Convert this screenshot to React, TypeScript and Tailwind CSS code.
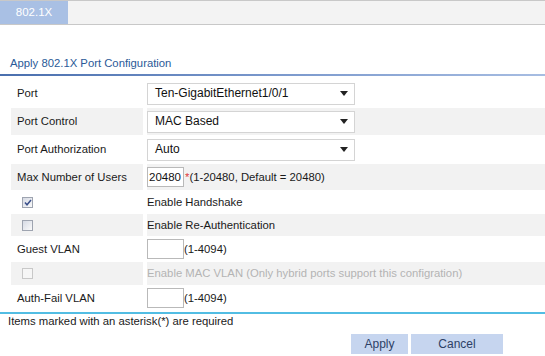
import React from 'react';

const font = { fontFamily: '"Liberation Sans", Arial, sans-serif' };

const Select: React.FC<{ value: string }> = ({ value }) => (
  <div className="flex h-[22px] w-[208px] items-center justify-between border border-[#d4d4d4] bg-white pl-[7px] pr-[6px] text-[12px] text-[#111]">
    <span>{value}</span>
    <svg width="8" height="5" viewBox="0 0 8 5">
      <path d="M0 0h8L4 5z" fill="#222" />
    </svg>
  </div>
);

const Checkbox: React.FC<{ checked?: boolean; disabled?: boolean }> = ({ checked, disabled }) => (
  <div
    className={`flex h-[11px] w-[11px] items-center justify-center border ${
      disabled ? 'border-[#c8c8c8] bg-[#f6f6f6]' : 'border-[#9ea4b0] bg-gradient-to-br from-[#d6dae4] to-[#fafafa]'
    }`}
  >
    {checked && (
      <svg width="8" height="7" viewBox="0 0 8 7">
        <path d="M1 3.5l2 2.3L7 1" stroke="#3a4f8a" strokeWidth="1.5" fill="none" />
      </svg>
    )}
  </div>
);

const Row: React.FC<{ label: React.ReactNode; gray?: boolean; h: string; children: React.ReactNode }> = ({
  label,
  gray,
  h,
  children,
}) => (
  <div className={`flex gap-[4px] ${h}`}>
    <div className={`flex w-[132px] items-center pl-[6px] ${gray ? 'bg-[#f2f2f2]' : ''}`}>{label}</div>
    <div className={`flex flex-1 items-center ${gray ? 'bg-[#f2f2f2]' : ''}`}>{children}</div>
  </div>
);

const Input: React.FC<{ value?: string }> = ({ value }) => (
  <div className="flex h-[20px] w-[37px] items-center border border-[#b9b9b9] bg-white pl-[1px] text-[11.5px] text-[#111]">
    {value}
  </div>
);

export default function App() {
  return (
    <div className="h-[356px] w-[545px] bg-white text-[11.3px] leading-[13px] text-[#1a1a1a]" style={font}>
      {/* tab bar */}
      <div className="flex h-[25px] border-y border-[#c8c8c8] bg-[#f3f3f3]">
        <div className="flex w-[68px] items-center justify-center bg-[#a9c0e4] text-[11.5px] text-white">802.1X</div>
      </div>

      <div className="pt-[32px]">
        <div className="pl-[10px] text-[#2b5a98]">Apply 802.1X Port Configuration</div>
        <div className="mt-[4px] h-[2px] bg-gradient-to-r from-[#4a6fae] via-[#7a98cc] to-[#a7bde2]" />
      </div>

      <div className="flex flex-col gap-[1px] pl-[11px] pt-[4px]">
        <Row label="Port" h="h-[27px]">
          <Select value="Ten-GigabitEthernet1/0/1" />
        </Row>
        <Row label="Port Control" h="h-[27px]" gray>
          <Select value="MAC Based" />
        </Row>
        <Row label="Port Authorization" h="h-[27px]">
          <Select value="Auto" />
        </Row>
        <Row label="Max Number of Users" h="h-[26px]" gray>
          <Input value="20480" />
          <span className="ml-[1px] text-[#e04040]">*</span>
          <span>(1-20480, Default = 20480)</span>
        </Row>
        <Row label={<span className="pl-[5px]"><Checkbox checked /></span>} h="h-[22px]">
          Enable Handshake
        </Row>
        <Row label={<span className="pl-[5px]"><Checkbox /></span>} h="h-[22px]" gray>
          Enable Re-Authentication
        </Row>
        <Row label="Guest VLAN" h="h-[24px]">
          <Input />
          <span>(1-4094)</span>
        </Row>
        <Row label={<span className="pl-[5px]"><Checkbox disabled /></span>} h="h-[23px]" gray>
          <span className="text-[#b4b4b4]">Enable MAC VLAN (Only hybrid ports support this configration)</span>
        </Row>
        <Row label="Auth-Fail VLAN" h="h-[24px]">
          <Input />
          <span>(1-4094)</span>
        </Row>
      </div>

      <div className="mt-[2px] h-[2px] bg-[#52bde3]" />
      <div className="pl-[8px] pt-[1px]">Items marked with an asterisk(*) are required</div>

      <div className="flex gap-[3px] pl-[351px] pt-[6px]">
        <button className="h-[20px] w-[57px] bg-[#c6d5ef] text-[12px] text-[#2d3f66]" style={font}>
          Apply
        </button>
        <button className="h-[20px] w-[92px] bg-[#c6d5ef] text-[12px] text-[#2d3f66]" style={font}>
          Cancel
        </button>
      </div>
    </div>
  );
}
